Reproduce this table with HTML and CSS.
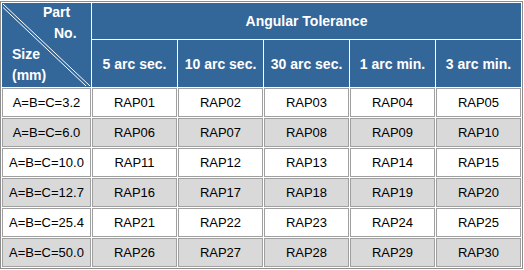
FILE: index.html
```html
<!DOCTYPE html>
<html>
<head>
<meta charset="utf-8">
<link rel="stylesheet" href="styles.css">
</head>
<body>
<table class="grid">
  <tr class="head1">
    <th class="corner" rowspan="2">
      <svg class="diag" viewBox="0 0 88 83" preserveAspectRatio="none">
        <line x1="0" y1="0" x2="88" y2="83" />
        <line x1="0" y1="3.5" x2="84" y2="83" />
      </svg>
      <div class="corner-lines">
        <div class="l-part">Part</div>
        <div class="l-no">No.</div>
        <div class="l-size">Size</div>
        <div class="l-mm">(mm)</div>
      </div>
    </th>
    <th class="group" colspan="5">Angular Tolerance</th>
  </tr>
  <tr class="head2">
    <th>5 arc sec.</th>
    <th>10 arc sec.</th>
    <th>30 arc sec.</th>
    <th>1 arc min.</th>
    <th>3 arc min.</th>
  </tr>
  <tr class="odd"><td>A=B=C=3.2</td><td>RAP01</td><td>RAP02</td><td>RAP03</td><td>RAP04</td><td>RAP05</td></tr>
  <tr class="even"><td>A=B=C=6.0</td><td>RAP06</td><td>RAP07</td><td>RAP08</td><td>RAP09</td><td>RAP10</td></tr>
  <tr class="odd"><td>A=B=C=10.0</td><td>RAP11</td><td>RAP12</td><td>RAP13</td><td>RAP14</td><td>RAP15</td></tr>
  <tr class="even"><td>A=B=C=12.7</td><td>RAP16</td><td>RAP17</td><td>RAP18</td><td>RAP19</td><td>RAP20</td></tr>
  <tr class="odd"><td>A=B=C=25.4</td><td>RAP21</td><td>RAP22</td><td>RAP23</td><td>RAP24</td><td>RAP25</td></tr>
  <tr class="even"><td>A=B=C=50.0</td><td>RAP26</td><td>RAP27</td><td>RAP28</td><td>RAP29</td><td>RAP30</td></tr>
</table>
</body>
</html>
```

FILE: styles.css
```css
html, body {
  margin: 0;
  padding: 0;
  background: #ffffff;
}
body {
  padding: 1px 0 0 0;
}
.grid {
  border-collapse: separate;
  border-spacing: 1px;
  border: 1px solid #8c8c8c;
  margin: 0;
  table-layout: fixed;
  font-family: "Liberation Sans", Arial, sans-serif;
}
.grid th, .grid td {
  box-sizing: border-box;
  padding: 0;
  text-align: center;
}
.grid th {
  background: #336699;
  color: #ffffff;
  font-weight: bold;
  font-size: 14px;
  border: 1px solid #336699;
}
.grid td {
  font-size: 13px;
  color: #000000;
  border: 1px solid #a0a0a0;
  width: 85px;
  height: 29px;
}
.grid td:first-child {
  width: 89px;
}
.head1 th.group {
  height: 36px;
}
.head2 th {
  height: 47px;
  width: 85px;
}
.grid th.corner {
  position: relative;
  width: 89px;
  vertical-align: top;
  text-align: left;
}
.diag {
  position: absolute;
  left: 0;
  top: 0;
  width: 100%;
  height: 100%;
}
.diag line {
  stroke: #ffffff;
  stroke-width: 1;
  vector-effect: non-scaling-stroke;
}
.corner-lines {
  position: relative;
  line-height: 21px;
  margin-top: -2px;
}
.l-part { padding-left: 40px; }
.l-no { padding-left: 51px; }
.l-size { padding-left: 9px; }
.l-mm { padding-left: 9px; }
.odd td { background: #ffffff; }
.even td { background: #d9d9d9; }
```
